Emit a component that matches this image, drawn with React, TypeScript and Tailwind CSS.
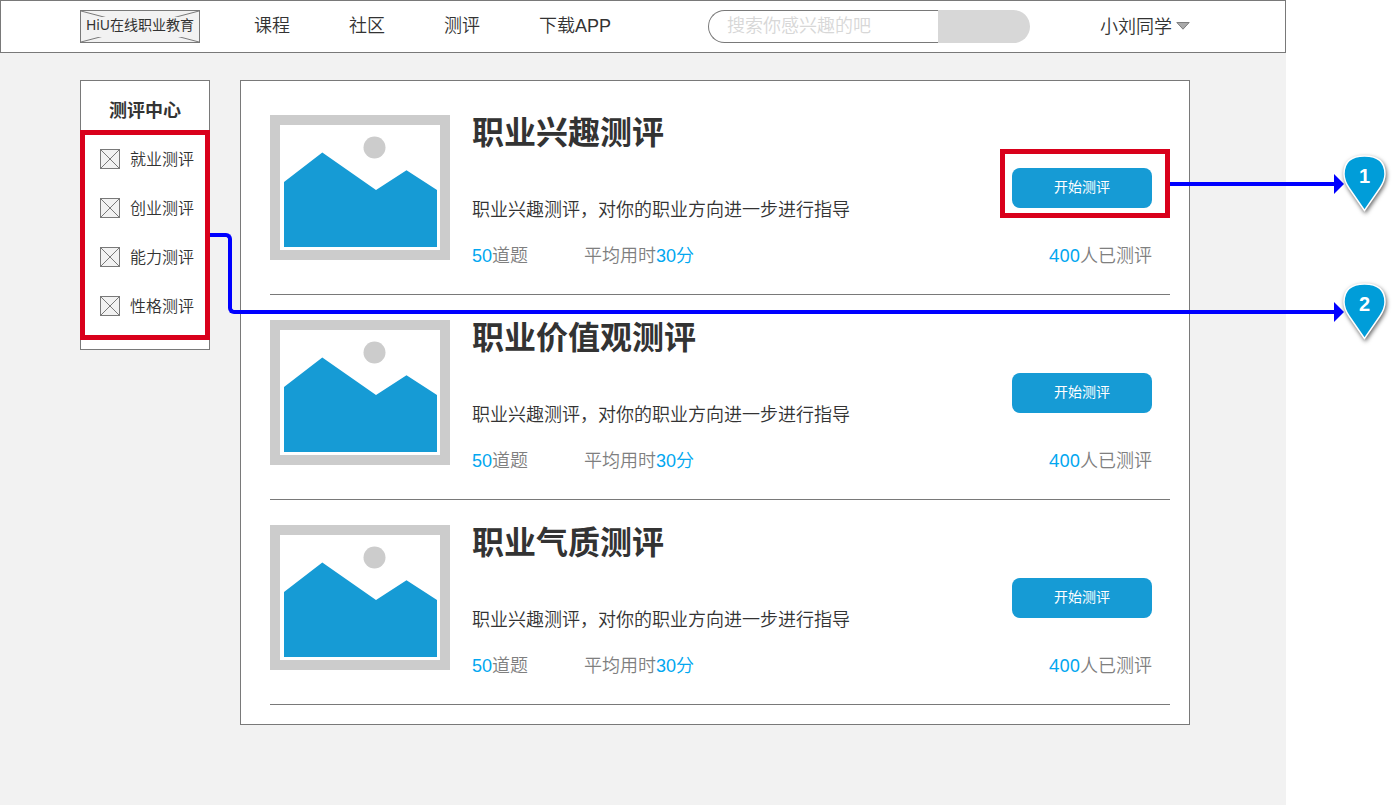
const NAV_LINKS = ["课程", "社区", "测评", "下载APP"];

const MENU = ["就业测评", "创业测评", "能力测评", "性格测评"];

const TESTS = [
  { title: "职业兴趣测评", highlighted: true },
  { title: "职业价值观测评", highlighted: false },
  { title: "职业气质测评", highlighted: false },
];

function Logo() {
  return (
    <a href="#" className="relative flex h-[33px] w-[120px] shrink-0 items-center justify-center border border-[#797979] bg-[#f2f2f2]">
      <svg className="absolute inset-0 h-full w-full" viewBox="0 0 118 31" preserveAspectRatio="none" stroke="#797979">
        <path d="M0 0 L118 31 M0 31 L118 0" />
      </svg>
      <span className="relative bg-[#f2f2f2] pb-1 text-sm leading-4 font-normal whitespace-nowrap">HiU在线职业教育</span>
    </a>
  );
}

function Header() {
  return (
    <header className="flex h-[53px] items-center border border-[#797979] bg-white pl-[79px] pr-[95px] text-lg whitespace-nowrap">
      <Logo />
      <nav className="ml-[54px] flex gap-[59px] pb-0.5">
        {NAV_LINKS.map((label) => (
          <a key={label} href="#" className="font-['Liberation_Sans','Noto_Sans_CJK_SC',sans-serif] leading-6">
            {label}
          </a>
        ))}
      </nav>
      <form className="ml-[97px] flex h-[33px] w-[322px]">
        <input
          type="text"
          aria-label="搜索"
          placeholder="搜索你感兴趣的吧"
          className="w-[230px] rounded-l-full border border-r-0 border-[#797979] bg-white pb-1 pl-[18px] leading-6 placeholder:text-[#d7d7d7] focus:outline-none"
        />
        <button type="button" aria-label="提交搜索" className="flex-1 rounded-r-full bg-[#d7d7d7]" />
      </form>
      <button type="button" className="ml-auto flex items-center gap-1 pb-0.5 leading-6">
        小刘同学
        <svg width="14" height="8" viewBox="0 0 14 8" fill="#aaaaaa" stroke="#7f7f7f">
          <path d="M0.8 0.5 H13.2 L7 7.2 Z" />
        </svg>
      </button>
    </header>
  );
}

function Sidebar() {
  return (
    <aside className="w-[130px] shrink-0 border border-[#797979] bg-white pb-[9px]">
      <h2 className="h-[49px] pt-[17px] text-center text-lg leading-6 font-bold">测评中心</h2>
      <nav className="-mx-px flex flex-col gap-[29px] border-5 border-[#d9001b] pt-[14px] pb-[19px] pl-[15px]">
        {MENU.map((label) => (
          <a key={label} href="#" className="flex items-center gap-[10px] leading-5 whitespace-nowrap">
            <svg width="20" height="20" viewBox="0 0 20 20" fill="#f2f2f2" stroke="#797979">
              <rect x="0.5" y="0.5" width="19" height="19" />
              <path d="M0.5 0.5 L19.5 19.5 M0.5 19.5 L19.5 0.5" />
            </svg>
            {label}
          </a>
        ))}
      </nav>
    </aside>
  );
}

function Picture() {
  return (
    <svg className="shrink-0" width="180" height="145" viewBox="0 0 180 145">
      <rect width="180" height="145" fill="#cccccc" />
      <rect x="10" y="10" width="160" height="125" fill="#ffffff" />
      <circle cx="104.5" cy="32.5" r="11" fill="#cccccc" />
      <path d="M14 67 L52.3 37.5 L106 75 L136.5 55.3 L167 75 V132 H14 Z" fill="#169bd5" />
    </svg>
  );
}

function Arrowhead() {
  return (
    <svg width="10" height="20" viewBox="0 0 10 20" fill="#0000ff">
      <path d="M0 0 L10 10 L0 20 Z" />
    </svg>
  );
}

function TestRow({ title, highlighted }: { title: string; highlighted: boolean }) {
  return (
    <article className="flex border-b border-[#797979] pb-7 text-lg">
      <Picture />
      <div className="ml-[22px] flex-1">
        <h3 className="text-[32px] leading-[34px] font-bold">{title}</h3>
        <p className="mt-[50px] leading-5">职业兴趣测评，对你的职业方向进一步进行指导</p>
        <p className="mt-[27px] flex gap-14 font-['Liberation_Sans','Noto_Sans_CJK_SC',sans-serif] leading-5 text-[#7f7f7f]">
          <span>
            <span className="text-[#02a7f0]">50</span>道题
          </span>
          <span>
            平均用时<span className="text-[#02a7f0]">30分</span>
          </span>
        </p>
      </div>
      <div className="mt-[34px] w-[170px] shrink-0">
        <div
          className={`relative border-5 pt-[14px] pr-[13px] pb-[5px] pl-[7px] ${
            highlighted ? "border-[#d9001b]" : "border-transparent"
          }`}
        >
          <button type="button" className="block h-10 w-full rounded-lg bg-[#169bd5] pb-0.5 text-sm font-normal text-white">
            开始测评
          </button>
          {highlighted && (
            <div className="absolute top-[20px] left-full ml-[5px] flex w-[174px] items-center">
              <div className="h-1 flex-1 bg-[#0000ff]" />
              <Arrowhead />
            </div>
          )}
        </div>
        <p className="mt-[27px] pr-[18px] text-right leading-5 text-[#7f7f7f]">
          <span className="font-normal text-[#02a7f0]">400</span>人已测评
        </p>
      </div>
    </article>
  );
}

function Pin({ label, className }: { label: string; className: string }) {
  return (
    <div className={`absolute right-[7px] w-[43px] ${className}`}>
      <svg className="overflow-visible drop-shadow-[1px_2px_2px_rgba(0,0,0,0.6)]" width="43" height="56" viewBox="0 0 43 56">
        <path
          d="M21.5 55.5 L6 33 C3 28.5 1 24 1 19 C1 8 7 1 21.5 1 C36 1 42 8 42 19 C42 24 40 28.5 37 33 Z"
          fill="#009dd9"
          stroke="#ffffff"
          strokeWidth="1.5"
        />
      </svg>
      <span className="absolute inset-x-0 top-[9px] text-center font-['Liberation_Sans',sans-serif] text-xl leading-6 font-bold text-white">
        {label}
      </span>
    </div>
  );
}

export default function App() {
  return (
    <div className="relative min-h-screen bg-white pr-[107px] font-['Noto_Sans','Noto_Sans_CJK_SC',sans-serif] font-[350] text-[#333333]">
      <div className="min-h-screen bg-[#f2f2f2]">
        <Header />
        <div className="flex items-start gap-[30px] pt-[27px] pr-24 pb-20 pl-20">
          <Sidebar />
          <main className="flex flex-1 flex-col gap-[25px] border border-[#797979] bg-white pt-[34px] pr-[19px] pb-[19px] pl-[29px]">
            {TESTS.map((test) => (
              <TestRow key={test.title} {...test} />
            ))}
          </main>
        </div>
      </div>

      {/* connector from the side menu to note 2 */}
      <div className="absolute top-[233px] left-[210px] h-10 w-[22px] rounded-tr-md border-t-4 border-r-4 border-[#0000ff]" />
      <div className="absolute top-[272px] right-[59px] left-[228px] h-[42px] rounded-bl-md border-b-4 border-l-4 border-[#0000ff]" />
      <div className="absolute top-[302px] right-[49px]">
        <Arrowhead />
      </div>

      <Pin label="1" className="top-[155px]" />
      <Pin label="2" className="top-[283px]" />
    </div>
  );
}
